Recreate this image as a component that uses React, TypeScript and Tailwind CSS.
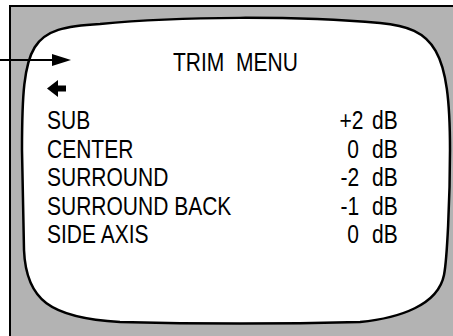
import React from "react";

const rows = [
  { label: "SUB", value: "+2" },
  { label: "CENTER", value: "0" },
  { label: "SURROUND", value: "-2" },
  { label: "SURROUND BACK", value: "-1" },
  { label: "SIDE AXIS", value: "0" },
];

export default function App() {
  return (
    <div
      className="relative h-[336px] w-[453px] overflow-hidden bg-white text-black"
      style={{ fontFamily: '"Liberation Sans", Arial, sans-serif' }}
    >
      {/* tv screen drawing */}
      <svg className="absolute inset-0" width="453" height="336" viewBox="0 0 453 336">
        <rect x="10" y="6" width="460" height="340" fill="#b3b3b3" stroke="#000" strokeWidth="2" />
        <path
          d="M 22 150 C 22 40, 30 28, 100 24 C 180 16, 300 16, 380 23 C 435 28, 450 50, 450 150 C 450 200, 447 260, 444 275 C 438 305, 400 318, 360 322 C 280 324, 200 324, 120 322 C 50 318, 26 300, 24 250 Z"
          fill="#fff"
          stroke="#000"
          strokeWidth="2.5"
        />
        <line x1="0" y1="60" x2="56" y2="60" stroke="#000" strokeWidth="2" />
        <polygon points="52,54 71,60 52,66" fill="#000" />
      </svg>

      <div className="relative pl-[47px] pt-[48px] text-[25px] leading-[28.5px]">
        <div className="pl-[126px]">
          <span className="inline-block origin-left scale-x-[0.84] whitespace-pre">TRIM  MENU</span>
        </div>
        <svg className="mb-[9px] mt-[3.5px] block" width="19" height="17" viewBox="0 0 19 17">
          <polygon points="0,8.5 11,0 11,17" fill="#000" />
          <rect x="10" y="5.5" width="9" height="6" fill="#000" />
        </svg>
        {rows.map((r) => (
          <div key={r.label} className="flex">
            <span className="w-[288px]">
              <span className="inline-block origin-left scale-x-[0.84] whitespace-pre">{r.label}</span>
            </span>
            <span className="w-[24px] text-right">
              <span className="inline-block origin-right scale-x-[0.84]">{r.value}</span>
            </span>
            <span className="ml-[13px]">
              <span className="inline-block origin-left scale-x-[0.84]">dB</span>
            </span>
          </div>
        ))}
      </div>
    </div>
  );
}
